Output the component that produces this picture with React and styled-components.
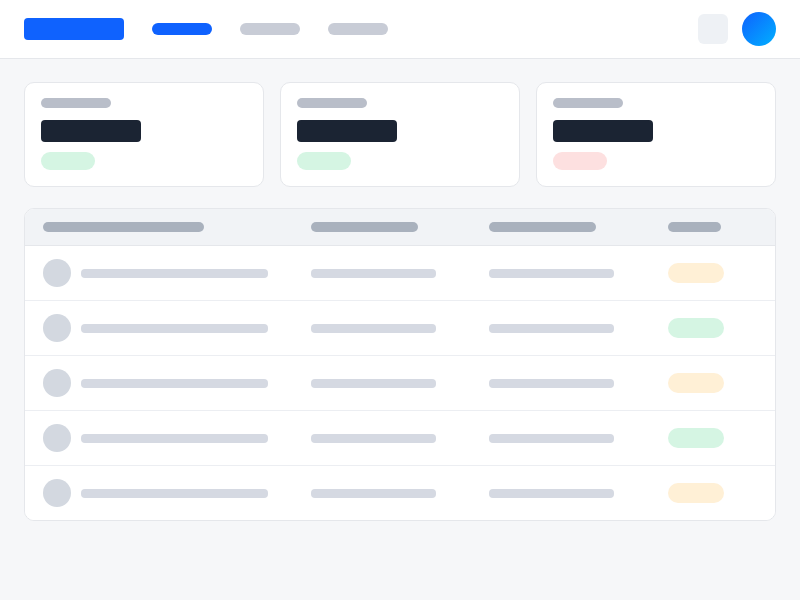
import styled, { createGlobalStyle } from 'styled-components';

const GlobalStyle = createGlobalStyle`
  html, body {
    margin: 0;
    padding: 0;
    background: #f6f7f9;
    font-family: Inter, 'Liberation Sans', sans-serif;
  }
  * {
    box-sizing: border-box;
  }
`;

const Page = styled.div`
  min-height: 600px;
  background: #f6f7f9;
`;

const Header = styled.header`
  height: 59px;
  background: #fff;
  border-bottom: 1px solid #e5e7eb;
  display: flex;
  align-items: center;
  padding: 0 24px;
`;

const Logo = styled.div`
  width: 100px;
  height: 22px;
  border-radius: 4px;
  background: #0f62fe;
`;

const Nav = styled.nav`
  display: flex;
  gap: 28px;
  margin-left: 28px;
`;

const NavPill = styled.div`
  width: 60px;
  height: 12px;
  border-radius: 6px;
  background: ${(p) => (p.active ? '#0f62fe' : '#c8ccd6')};
`;

const Actions = styled.div`
  margin-left: auto;
  display: flex;
  align-items: center;
  gap: 14px;
`;

const IconButton = styled.div`
  width: 30px;
  height: 30px;
  border-radius: 6px;
  background: #eef1f5;
`;

const Avatar = styled.div`
  width: 34px;
  height: 34px;
  border-radius: 50%;
  background: linear-gradient(135deg, #0f62fe 0%, #00b0ff 100%);
`;

const Main = styled.main`
  padding: 23px 24px;
  display: flex;
  flex-direction: column;
  gap: 21px;
`;

const Stats = styled.div`
  display: grid;
  grid-template-columns: repeat(3, 1fr);
  gap: 16px;
`;

const Card = styled.div`
  background: #fff;
  border: 1px solid #e5e7eb;
  border-radius: 10px;
  padding: 15px 16px 16px;
  display: flex;
  flex-direction: column;
  align-items: flex-start;
`;

const Bar = styled.div`
  width: ${(p) => p.w}px;
  height: ${(p) => p.h || 10}px;
  border-radius: ${(p) => p.r ?? 5}px;
  background: ${(p) => p.color};
  flex-shrink: 0;
`;

const CardLabel = styled(Bar)`
  margin-bottom: 12px;
`;

const CardValue = styled(Bar)`
  margin-bottom: 10px;
`;

const Table = styled.div`
  background: #fff;
  border: 1px solid #e5e7eb;
  border-radius: 10px;
  overflow: hidden;
`;

const Row = styled.div`
  display: grid;
  grid-template-columns: 268px 178px 179px 1fr;
  align-items: center;
  height: ${(p) => (p.head ? 37 : 55)}px;
  background: ${(p) => (p.head ? '#f1f3f6' : '#fff')};
  border-bottom: 1px solid ${(p) => (p.head ? '#e5e7eb' : '#eceef2')};
  &:last-child {
    border-bottom: none;
    height: 54px;
  }
`;

const Cell = styled.div`
  padding: 0 18px;
  display: flex;
  align-items: center;
  gap: 10px;
`;

const Circle = styled.div`
  width: 28px;
  height: 28px;
  border-radius: 50%;
  background: #d3d8e0;
  flex-shrink: 0;
`;

const Badge = styled.div`
  width: 56px;
  height: 20px;
  border-radius: 10px;
  background: ${(p) => (p.tone === 'green' ? '#d5f5e3' : '#fff0d6')};
`;

const stats = ['#d5f5e3', '#d5f5e3', '#fde0e0'];
const rows = ['orange', 'green', 'orange', 'green', 'orange'];

export default function App() {
  return (
    <Page>
      <GlobalStyle />
      <Header>
        <Logo />
        <Nav>
          <NavPill active />
          <NavPill />
          <NavPill />
        </Nav>
        <Actions>
          <IconButton />
          <Avatar />
        </Actions>
      </Header>
      <Main>
        <Stats>
          {stats.map((c, i) => (
            <Card key={i}>
              <CardLabel w={70} h={10} color="#b9bec9" />
              <CardValue w={100} h={22} r={4} color="#1b2433" />
              <Bar w={54} h={18} r={9} color={c} />
            </Card>
          ))}
        </Stats>
        <Table>
          <Row head>
            <Cell><Bar w={161} color="#a9b1bd" /></Cell>
            <Cell><Bar w={107} color="#a9b1bd" /></Cell>
            <Cell><Bar w={107} color="#a9b1bd" /></Cell>
            <Cell><Bar w={53} color="#a9b1bd" /></Cell>
          </Row>
          {rows.map((tone, i) => (
            <Row key={i}>
              <Cell>
                <Circle />
                <Bar w={187} h={9} r={4} color="#d5d9e2" />
              </Cell>
              <Cell><Bar w={125} h={9} r={4} color="#d5d9e2" /></Cell>
              <Cell><Bar w={125} h={9} r={4} color="#d5d9e2" /></Cell>
              <Cell><Badge tone={tone} /></Cell>
            </Row>
          ))}
        </Table>
      </Main>
    </Page>
  );
}
